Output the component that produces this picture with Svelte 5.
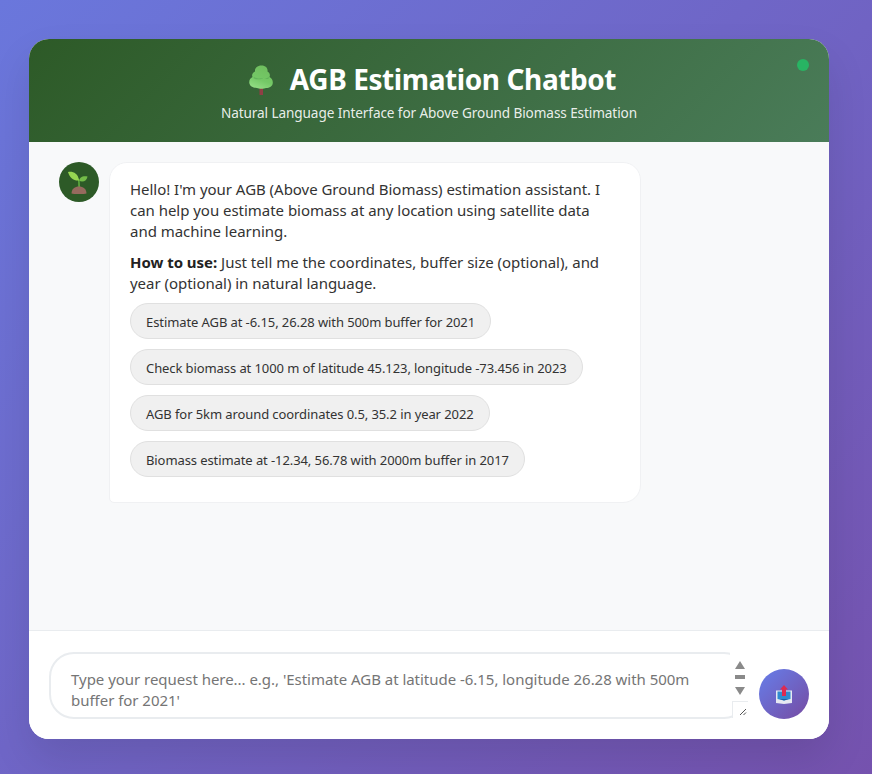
<script lang="ts">
	const samples = [
		'Estimate AGB at -6.15, 26.28 with 500m buffer for 2021',
		'Check biomass at 1000 m of latitude 45.123, longitude -73.456 in 2023',
		'AGB for 5km around coordinates 0.5, 35.2 in year 2022',
		'Biomass estimate at -12.34, 56.78 with 2000m buffer in 2017'
	];
</script>

<div class="page">
	<main class="card">
		<header class="header">
			<h1>
				<svg class="tree" viewBox="0 0 24 30" aria-hidden="true">
					<defs>
						<linearGradient id="leaf" x1="0.7" y1="0" x2="0.3" y2="1">
							<stop offset="0" stop-color="#6fbd5e" />
							<stop offset="0.6" stop-color="#74c866" />
							<stop offset="1" stop-color="#93dd84" />
						</linearGradient>
					</defs>
					<rect x="10.500" y="21" width="3.500" height="9" fill="#8f3f45" />
					<path
						d="M12.500 0.500C8 0.500 5.500 3.500 6 6.500 3.500 7.500 2.500 10 3.500 12 1.200 13 0 15.500 0.300 18 0.800 21.500 4.500 23 8 23 10 24 15 24 17 23 20.500 23 23.500 21.500 23.800 18 24 15.500 22.800 13 20.500 12 21.500 10 20.500 7.500 18.500 6.500 19 3.500 17 0.500 12.500 0.500Z"
						fill="url(#leaf)"
					/>
					<path d="M5 12C8 13.800 11.500 13.800 14.500 12.800 12 14.800 7.500 14.800 4.500 13.300Z" fill="#4f9f50" opacity="0.5" />
					<path d="M15.500 13C17.500 13.500 19 13 20.300 12 20 14.200 17.500 14.800 15.500 13Z" fill="#4f9f50" opacity="0.5" />
				</svg>
				AGB Estimation Chatbot
			</h1>
			<p>Natural Language Interface for Above Ground Biomass Estimation</p>
			<span class="status"></span>
		</header>

		<section class="messages">
			<div class="avatar">
				<svg viewBox="0 0 24 24" aria-hidden="true">
					<path d="M10.800 8.500C11.200 11 11.300 14 11.300 18L13 18C12.900 14 12.800 11.500 12.300 9Z" fill="#5fae3f" />
					<path d="M1 2C5 1 11 2.500 12 10.500 6.500 11 2.500 7.500 1 2Z" fill="#96d651" />
					<path d="M12.300 11C12.300 7.500 15.500 5.500 20.500 6.500 20 10.500 16.500 12.500 12.300 11Z" fill="#74bd48" />
					<path d="M4.500 23.500C4.500 19 8 16.500 12 16.500S19.500 19 19.500 23.500C16 24.500 8 24.500 4.500 23.500Z" fill="#966a5e" />
				</svg>
			</div>
			<div class="bubble">
				<p>Hello! I'm your AGB (Above Ground Biomass) estimation assistant. I can help you estimate biomass at any location using satellite data and machine learning.</p>
				<p><strong>How to use:</strong> Just tell me the coordinates, buffer size (optional), and year (optional) in natural language.</p>
				<div class="samples">
					{#each samples as sample}
						<button class="chip" type="button">{sample}</button>
					{/each}
				</div>
			</div>
		</section>

		<footer class="composer">
			<div class="field">
				<textarea
					rows="2"
					placeholder="Type your request here... e.g., 'Estimate AGB at latitude -6.15, longitude 26.28 with 500m buffer for 2021'"
				></textarea>
				<div class="scrollbar">
					<span class="arrow up"></span>
					<span class="thumb"></span>
					<span class="arrow down"></span>
				</div>
				<div class="resizer">
					<svg viewBox="0 0 15 15" aria-hidden="true">
						<path d="M7 13L13 7M10.500 13L13 10.500" stroke="#555" stroke-width="1" fill="none" />
					</svg>
				</div>
			</div>
			<button class="send" type="button" aria-label="Send">
				<svg viewBox="0 0 16 19" aria-hidden="true">
					<path d="M0 5.500H16V18L8 19 0 18Z" fill="#e6e9f2" />
					<path d="M1.500 6.500H14.500V14L8 15.500 1.500 14Z" fill="#2f8bd0" />
					<path d="M3.500 14H12.500L8 15.500Z" fill="#1d5fa8" />
					<path d="M8 0L12 4.500H10V11H6V4.500H4Z" fill="#dc2a52" />
				</svg>
			</button>
		</footer>
	</main>
</div>

<style>
	:global(body) {
		margin: 0;
	}

	.page {
		box-sizing: border-box;
		height: 774px;
		padding: 39px 43px 35px 29px;
		background: linear-gradient(135deg, #6a77dc 0%, #7552ae 100%);
		font-family: 'Noto Sans', 'Open Sans', sans-serif;
	}

	.card {
		display: flex;
		flex-direction: column;
		height: 700px;
		border-radius: 20px;
		overflow: hidden;
		background: #fff;
		box-shadow: 0 20px 40px rgba(0, 0, 0, 0.1);
	}

	.header {
		position: relative;
		height: 103px;
		box-sizing: border-box;
		padding-top: 19px;
		text-align: center;
		color: #fff;
		background: linear-gradient(135deg, #2d5a27 0%, #4a7c59 100%);
	}

	h1 {
		display: flex;
		align-items: center;
		justify-content: center;
		gap: 17px;
		margin: 0;
		height: 42px;
		padding-left: 7px;
		font-size: 28px;
		line-height: 42px;
		font-weight: 700;
		letter-spacing: -0.41px;
	}

	.tree {
		width: 24px;
		height: 30px;
		margin-top: 2px;
	}

	.header p {
		margin: 3px 0 0;
		font-size: 13.6px;
		line-height: 20px;
		letter-spacing: -0.1px;
		color: rgba(255, 255, 255, 0.9);
	}

	.status {
		position: absolute;
		top: 20px;
		right: 20px;
		width: 12px;
		height: 12px;
		border-radius: 50%;
		background: #28b463;
	}

	.messages {
		flex: 1;
		display: flex;
		align-items: flex-start;
		gap: 10px;
		padding: 20px 30px;
		background: #f8f9fa;
	}

	.avatar {
		display: flex;
		align-items: center;
		justify-content: center;
		flex: none;
		width: 40px;
		height: 40px;
		border-radius: 50%;
		background: #2d5a27;
	}

	.avatar svg {
		width: 24px;
		height: 24px;
	}

	.bubble {
		box-sizing: border-box;
		width: 532px;
		height: 341px;
		padding: 16px 20px 15px;
		border: 1px solid #f0f1f3;
		border-radius: 18px 18px 18px 5px;
		background: #fff;
		font-size: 15px;
		line-height: 21px;
		letter-spacing: -0.03px;
		color: #333;
	}

	.bubble p {
		margin: 0 0 10px;
	}

	.bubble strong {
		font-weight: 700;
		color: #222;
	}

	.samples {
		display: flex;
		flex-direction: column;
		align-items: flex-start;
		gap: 10px;
		margin-top: -1px;
	}

	.chip {
		box-sizing: border-box;
		height: 36px;
		padding: 1px 15px 0;
		border: 1px solid #e0e0e0;
		border-radius: 18px;
		background: #f0f0f0;
		font-family: inherit;
		font-size: 13px;
		letter-spacing: -0.09px;
		color: #333;
		white-space: nowrap;
	}

	.composer {
		display: flex;
		align-items: flex-start;
		gap: 10px;
		height: 109px;
		box-sizing: border-box;
		padding: 21px 20px 0;
		border-top: 1px solid #e9ecef;
		background: #fff;
	}

	.field {
		position: relative;
		width: 700px;
		height: 67px;
	}

	textarea {
		display: block;
		box-sizing: border-box;
		width: 100%;
		height: 100%;
		padding: 15px 35px 15px 20px;
		border: 2px solid #e9ecef;
		border-radius: 25px;
		outline: none;
		overflow: hidden;
		resize: none;
		background: #fff;
		font-family: inherit;
		font-size: 15px;
		line-height: 21px;
		letter-spacing: -0.03px;
		color: #333;
	}

	textarea::placeholder {
		color: #757575;
		opacity: 1;
	}

	.scrollbar {
		position: absolute;
		top: 0;
		right: 0;
		display: flex;
		flex-direction: column;
		align-items: center;
		width: 19px;
		height: 50px;
		padding-top: 9px;
		box-sizing: border-box;
		background: #fff;
	}

	.arrow {
		width: 0;
		height: 0;
		border-left: 5px solid transparent;
		border-right: 5px solid transparent;
	}

	.arrow.up {
		border-bottom: 8px solid #8a8a8a;
	}

	.arrow.down {
		border-top: 8px solid #8a8a8a;
	}

	.thumb {
		width: 10px;
		height: 4px;
		margin: 6px 0 8px;
		background: #8a8a8a;
	}

	.resizer {
		position: absolute;
		right: 1px;
		bottom: 1px;
		width: 16px;
		height: 17px;
		box-sizing: border-box;
		border-left: 1px solid #e9ecef;
		border-top: 1px solid #e9ecef;
		background: #fff;
	}

	.resizer svg {
		display: block;
		width: 15px;
		height: 15px;
	}

	.send {
		display: flex;
		align-items: center;
		justify-content: center;
		flex: none;
		width: 50px;
		height: 50px;
		margin-top: 17px;
		padding: 0;
		border: none;
		border-radius: 50%;
		background: linear-gradient(135deg, #667eea 0%, #764ba2 100%);
	}

	.send svg {
		width: 16px;
		height: 19px;
	}
</style>
